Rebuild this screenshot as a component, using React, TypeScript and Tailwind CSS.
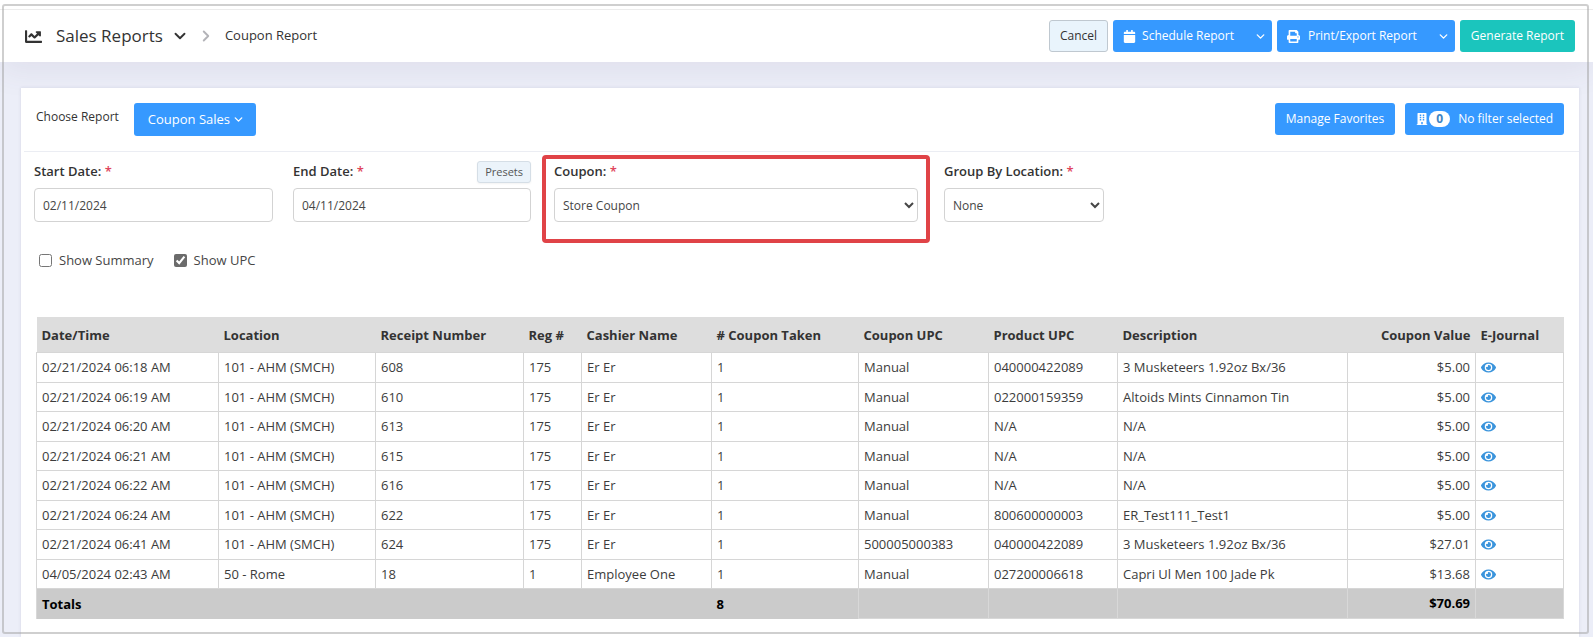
import React from "react";
import { FaBuilding, FaCalendar, FaChartLine, FaEye, FaPrint } from "react-icons/fa";
import { ChevronDown, ChevronRight } from "lucide-react";

type Row = [string, string, string, string, string, string, string, string, string, string];

const rows: Row[] = [
  ["02/21/2024 06:18 AM", "101 - AHM (SMCH)", "608", "175", "Er Er", "1", "Manual", "040000422089", "3 Musketeers 1.92oz Bx/36", "$5.00"],
  ["02/21/2024 06:19 AM", "101 - AHM (SMCH)", "610", "175", "Er Er", "1", "Manual", "022000159359", "Altoids Mints Cinnamon Tin", "$5.00"],
  ["02/21/2024 06:20 AM", "101 - AHM (SMCH)", "613", "175", "Er Er", "1", "Manual", "N/A", "N/A", "$5.00"],
  ["02/21/2024 06:21 AM", "101 - AHM (SMCH)", "615", "175", "Er Er", "1", "Manual", "N/A", "N/A", "$5.00"],
  ["02/21/2024 06:22 AM", "101 - AHM (SMCH)", "616", "175", "Er Er", "1", "Manual", "N/A", "N/A", "$5.00"],
  ["02/21/2024 06:24 AM", "101 - AHM (SMCH)", "622", "175", "Er Er", "1", "Manual", "800600000003", "ER_Test111_Test1", "$5.00"],
  ["02/21/2024 06:41 AM", "101 - AHM (SMCH)", "624", "175", "Er Er", "1", "500005000383", "040000422089", "3 Musketeers 1.92oz Bx/36", "$27.01"],
  ["04/05/2024 02:43 AM", "50 - Rome", "18", "1", "Employee One", "1", "Manual", "027200006618", "Capri Ul Men 100 Jade Pk", "$13.68"],
];

const columns = [
  { name: "Date/Time", width: "w-[182px]" },
  { name: "Location", width: "w-[157px]" },
  { name: "Receipt Number", width: "w-[148px]" },
  { name: "Reg #", width: "w-[58px]" },
  { name: "Cashier Name", width: "w-[130px]" },
  { name: "# Coupon Taken", width: "w-[147px]" },
  { name: "Coupon UPC", width: "w-[130px]" },
  { name: "Product UPC", width: "w-[129px]" },
  { name: "Description", width: "w-[230px]" },
  { name: "Coupon Value", width: "w-[128px]" },
  { name: "E-Journal", width: "w-[88px]" },
];

const blueButton = "flex items-center rounded-[3px] bg-[#3699ff] text-white";
const field = "h-[34px] w-full rounded-[4px] border border-[#d3d3d3] bg-white text-xs text-[#464646]";

function FieldLabel({ htmlFor, children }: { htmlFor: string; children: React.ReactNode }) {
  return (
    <label htmlFor={htmlFor} className="text-[13px] font-semibold text-[#333]">
      {children} <span className="text-[#e0455c]">*</span>
    </label>
  );
}

function SelectField({ id, value }: { id: string; value: string }) {
  return (
    <select id={id} defaultValue={value} className={`${field} px-1`}>
      <option>{value}</option>
    </select>
  );
}

function Header() {
  return (
    <header className="bg-white pt-[9px] shadow-[0_10px_30px_rgba(82,63,105,0.08)]">
      <div className="flex h-[53px] items-center justify-between border-t border-[#ececec] pr-[18px] pl-[25px]">
        <nav className="flex items-center text-[#333]">
          <FaChartLine className="mr-[14px] size-[17px]" />
          <a href="#reports" className="flex items-center text-[17px]">
            Sales Reports
            <ChevronDown className="ml-2 size-[18px]" strokeWidth={2.5} />
          </a>
          <ChevronRight className="mr-[10px] ml-2 size-[18px] text-[#b3b3b8]" strokeWidth={2.5} />
          <span className="text-[13px]">Coupon Report</span>
        </nav>
        <div className="flex gap-[5px] text-xs">
          <button className="h-8 rounded-[3px] border border-[#bfc8d0] bg-[#e9f4fc] px-[10px] text-[#333]">Cancel</button>
          <button className={`${blueButton} h-8 pr-[5px] pl-[10px]`}>
            <FaCalendar className="mr-[6px] size-[13px]" />
            Schedule Report
            <ChevronDown className="ml-5 size-[13px]" strokeWidth={2.5} />
          </button>
          <button className={`${blueButton} h-8 pr-[5px] pl-[10px]`}>
            <FaPrint className="mr-2 size-[13px]" />
            Print/Export Report
            <ChevronDown className="ml-5 size-[13px]" strokeWidth={2.5} />
          </button>
          <button className="h-8 rounded-[3px] bg-[#1bc5bd] px-[11px] text-white">Generate Report</button>
        </div>
      </div>
    </header>
  );
}

function Toolbar() {
  return (
    <div className="ml-[3px] flex items-start justify-between border-b border-[#ebedf3] pt-[15px] pr-[15px] pb-[15px] pl-3">
      <div className="flex">
        <span className="mr-[15px] pt-[6px] text-xs font-medium text-[#333]">Choose Report</span>
        <button className={`${blueButton} h-[33px] pr-[11px] pl-[14px] text-[13px]`}>
          Coupon Sales
          <ChevronDown className="ml-[2px] size-[13px]" strokeWidth={2.5} />
        </button>
      </div>
      <div className="flex gap-[10px] text-xs">
        <button className={`${blueButton} h-8 px-[11px]`}>Manage Favorites</button>
        <button className={`${blueButton} h-8 px-[11px]`}>
          <FaBuilding className="size-3" />
          <span className="mr-2 ml-px flex h-4 items-center rounded-full bg-white px-[7px] font-bold text-[#3d84c4]">0</span>
          No filter selected
        </button>
      </div>
    </div>
  );
}

function Filters() {
  return (
    <div className="pl-[13px]">
      <div className="flex pt-[3px]">
        <div className="mr-5 w-[239px] pt-[6px]">
          <div className="mb-[5px] flex h-[22px] items-center">
            <FieldLabel htmlFor="start">Start Date:</FieldLabel>
          </div>
          <input id="start" defaultValue="02/11/2024" className={`${field} px-2`} />
        </div>
        <div className="mr-[11px] w-[238px] pt-[6px]">
          <div className="mb-[5px] flex h-[22px] items-center justify-between">
            <FieldLabel htmlFor="end">End Date:</FieldLabel>
            <button className="h-[22px] rounded-[3px] border border-[#d5dee6] bg-[#ebf3fa] px-[7px] text-[11px] text-[#555] shadow-xs">Presets</button>
          </div>
          <input id="end" defaultValue="04/11/2024" className={`${field} px-2`} />
        </div>
        <div className="mr-[14px] h-[88px] w-[388px] rounded-[4px] border-4 border-[#e04347] px-2 pt-[2px]">
          <div className="mb-[5px] flex h-[22px] items-center">
            <FieldLabel htmlFor="coupon">Coupon:</FieldLabel>
          </div>
          <SelectField id="coupon" value="Store Coupon" />
        </div>
        <div className="w-40 pt-[6px]">
          <div className="mb-[5px] flex h-[22px] items-center">
            <FieldLabel htmlFor="group">Group By Location:</FieldLabel>
          </div>
          <SelectField id="group" value="None" />
        </div>
      </div>
      <div className="mt-2 flex gap-5 pl-[5px] text-[13px] text-[#464646]">
        <label className="flex items-center gap-[7px]">
          <input type="checkbox" className="size-[13px] accent-[#6b6b6b]" />
          Show Summary
        </label>
        <label className="flex items-center gap-[7px]">
          <input type="checkbox" defaultChecked className="size-[13px] accent-[#6b6b6b]" />
          Show UPC
        </label>
      </div>
    </div>
  );
}

const cell = "border border-[#d6d6d6] px-[5px] pt-px";
const totalCell = "border border-[#d8d8d8] px-[5px] pt-px";

function ReportTable() {
  return (
    <div className="pt-[46px] pr-[15px] pb-[18px] pl-[15px]">
      <table className="w-full table-fixed border-collapse text-left text-[13px] whitespace-nowrap text-[#3c3c3c]">
        <thead>
          <tr className="h-9 bg-[#ddd] text-[#333]">
            {columns.map((c) => (
              <th key={c.name} className={`${c.width} px-[5px] pt-[2px] font-bold ${c.name === "Coupon Value" ? "text-right" : ""}`}>
                {c.name}
              </th>
            ))}
          </tr>
        </thead>
        <tbody>
          {rows.map((row) => (
            <tr key={row[2]} className="h-[30px] even:h-[29px]">
              {row.map((value, i) => (
                <td key={i} className={`${cell} ${i === 9 ? "text-right" : ""}`}>
                  {value}
                </td>
              ))}
              <td className="border border-[#d6d6d6] px-[5px]">
                <a href="#journal" aria-label="View journal" className="block text-[#3a94dc]">
                  <FaEye className="size-[15px]" />
                </a>
              </td>
            </tr>
          ))}
        </tbody>
        <tfoot>
          <tr className="h-[30px] bg-[#cbcbcb] font-bold text-black">
            <td colSpan={5} className="border-l border-[#d8d8d8] px-[5px] pt-px">Totals</td>
            <td className="px-[5px] pt-px">8</td>
            <td className={totalCell}></td>
            <td className={totalCell}></td>
            <td className={totalCell}></td>
            <td className={`${totalCell} text-right`}>$70.69</td>
            <td className={totalCell}></td>
          </tr>
        </tfoot>
      </table>
    </div>
  );
}

export default function App() {
  return (
    <div className="relative flex min-h-screen flex-col bg-[#eceef8] font-['Open_Sans',sans-serif]">
      <Header />
      <main className="mt-[26px] mr-[14px] ml-[21px] grow bg-white shadow-[0_0_3px_rgba(80,80,120,0.15)]">
        <Toolbar />
        <Filters />
        <ReportTable />
      </main>
      <div className="pointer-events-none absolute top-1 right-1 bottom-[3px] left-[2px] rounded-[3px] border-2 border-[#a0a0a0]/50" />
    </div>
  );
}
